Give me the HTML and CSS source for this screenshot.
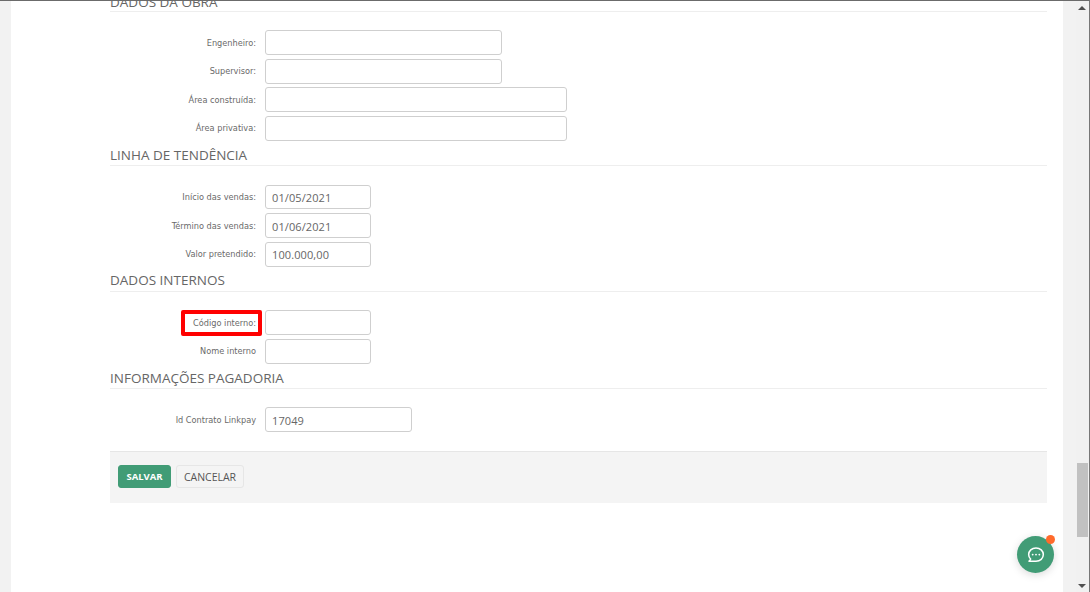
FILE: index.html
```html
<!DOCTYPE html>
<html lang="pt-BR">
<head>
<meta charset="utf-8">
<title>Dados da obra</title>
<link rel="stylesheet" href="styles.css">
</head>
<body>
<div class="window">
  <div class="gutter"></div>
  <main class="sheet">
    <div class="content">
      <h2 class="section-title first">DADOS DA OBRA</h2>
      <div class="rows">
        <div class="row"><label class="label">Engenheiro:</label><input class="field medium"></div>
        <div class="row"><label class="label">Supervisor:</label><input class="field medium"></div>
        <div class="row"><label class="label">Área construída:</label><input class="field large"></div>
        <div class="row"><label class="label">Área privativa:</label><input class="field large"></div>
      </div>
      <h2 class="section-title">LINHA DE TENDÊNCIA</h2>
      <div class="rows">
        <div class="row"><label class="label">Início das vendas:</label><input class="field small" value="01/05/2021"></div>
        <div class="row"><label class="label">Término das vendas:</label><input class="field small" value="01/06/2021"></div>
        <div class="row"><label class="label">Valor pretendido:</label><input class="field small" value="100.000,00"></div>
      </div>
      <h2 class="section-title">DADOS INTERNOS</h2>
      <div class="rows">
        <div class="row"><label class="label highlighted">Código interno:<span class="callout"></span></label><input class="field small"></div>
        <div class="row"><label class="label">Nome interno</label><input class="field small"></div>
      </div>
      <h2 class="section-title">INFORMAÇÕES PAGADORIA</h2>
      <div class="rows">
        <div class="row"><label class="label">Id Contrato Linkpay</label><input class="field contract" value="17049"></div>
      </div>
      <div class="actions">
        <button class="btn primary">SALVAR</button>
        <button class="btn secondary">CANCELAR</button>
      </div>
    </div>
    <button class="chat" aria-label="Chat">
      <svg viewBox="0 0 24 24" width="20" height="20" fill="none" stroke="#fff" stroke-width="1.8" stroke-linejoin="round" stroke-linecap="round">
        <path d="M12 3.5c5 0 8.8 3.5 8.8 8s-3.8 8-8.8 8H3.6l2-2.6C4 15.500 3.200 13.600 3.200 11.500c0-4.500 3.800-8 8.800-8z"/>
        <path d="M8 11.500h.01M12 11.500h.01M16 11.500h.01" stroke-width="2.200"/>
      </svg>
      <span class="chat-dot"></span>
    </button>
  </main>
  <div class="gutter right"></div>
  <div class="scrollbar">
    <span class="arrow up"></span>
    <span class="thumb"></span>
    <span class="arrow down"></span>
  </div>
</div>
</body>
</html>
```
FILE: styles.css
```css
* { box-sizing: border-box; }
html, body { margin: 0; height: 100%; overflow: hidden; background: #fff; }
.window {
  display: flex;
  height: 592px;
  border-top: 1px solid #6b6b6b;
  border-right: 1px solid #777;
}
.gutter { width: 11px; background: #f2f2f2; flex: none; }
.gutter.right { width: 13px; }
.sheet { position: relative; flex: 1; background: #fff; overflow: hidden; }
.content { padding: 0 16px 0 99px; margin-top: -8.500px; }
.section-title {
  margin: 0;
  height: 23px;
  padding-top: 1.500px;
  border-bottom: 1px solid #eeeeee;
  font: 400 13.500px/20px "Open Sans", sans-serif;
  color: #666;
  white-space: nowrap;
}
.section-title.first { height: 19.500px; padding-top: 0; line-height: 19px; }
.rows {
  display: flex;
  flex-direction: column;
  gap: 3.800px;
  padding: 18.300px 0 2.400px;
}
.row { display: flex; align-items: center; height: 24.800px; }
.label {
  position: relative;
  width: 146px;
  flex: none;
  text-align: right;
  font: 400 8.200px/12px "DejaVu Sans", sans-serif;
  color: #6a6a6a;
  white-space: nowrap;
}
.callout {
  position: absolute;
  left: 70.500px;
  right: -6px;
  top: -7px;
  bottom: -7px;
  border: 4px solid #ff0000;
  border-radius: 2px;
}
.field {
  margin-left: 9px;
  height: 24.800px;
  padding: 1px 6px 0;
  border: 1px solid #cfcfcf;
  border-radius: 3px;
  background: #fff;
  font: 400 11px "Open Sans", sans-serif;
  letter-spacing: 0.1px;
  color: #666;
}
.field.small { width: 106px; }
.field.medium { width: 237px; }
.field.large { width: 302px; }
.field.contract { width: 147px; }
.actions {
  display: flex;
  align-items: center;
  gap: 5px;
  height: 52px;
  margin-top: 16.500px;
  padding: 0 0 2px 8px;
  background: #f4f4f4;
  border-top: 1px solid #e6e6e6;
}
.btn {
  height: 23px;
  border-radius: 3px;
  padding: 0;
  font-family: "Open Sans", sans-serif;
  font-size: 10px;
  cursor: pointer;
}
.btn.primary {
  width: 53px;
  border: 1px solid #419c76;
  background: #419c76;
  color: #fff;
  font-weight: 700;
  font-size: 9.500px;
}
.btn.secondary {
  width: 68px;
  border: 1px solid #e6e6e6;
  background: #f4f4f4;
  color: #555;
  font-size: 10.500px;
}
.chat {
  position: absolute;
  right: 9px;
  bottom: 19px;
  width: 37px;
  height: 37px;
  display: flex;
  align-items: center;
  justify-content: center;
  padding: 0;
  border: 0;
  border-radius: 50%;
  background: #419c76;
  box-shadow: 0 2px 8px rgba(0, 0, 0, .15);
}
.chat-dot {
  position: absolute;
  top: -1px;
  right: -1px;
  width: 9px;
  height: 9px;
  border-radius: 50%;
  background: #ff6a2b;
}
.scrollbar {
  flex: none;
  width: 13px;
  background: #f1f1f1;
  display: flex;
  flex-direction: column;
  align-items: center;
  position: relative;
}
.arrow {
  position: absolute;
  left: 2px;
  width: 0;
  height: 0;
  border-left: 4px solid transparent;
  border-right: 4px solid transparent;
}
.arrow.up { top: 5px; border-bottom: 4px solid #505050; }
.arrow.down { bottom: 4px; border-top: 4px solid #505050; }
.thumb {
  width: 11px;
  height: 74px;
  margin-top: 462px;
  background: #c1c1c1;
}
```
